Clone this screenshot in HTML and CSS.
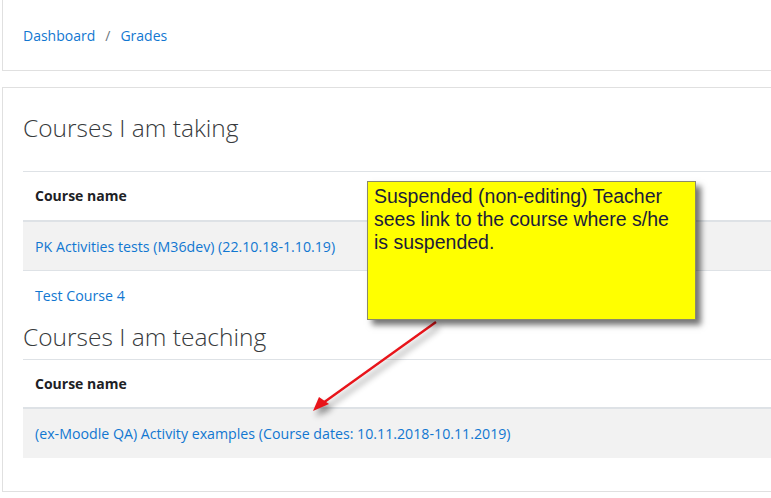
FILE: index.html
```html
<!DOCTYPE html>
<html>
<head>
<meta charset="utf-8">
<link rel="stylesheet" href="styles.css">
</head>
<body>
<div class="page">
  <div class="card nav-card">
    <nav class="breadcrumb">
      <a href="#">Dashboard</a><span class="sep">/</span><a href="#">Grades</a>
    </nav>
  </div>
  <div class="card main-card">
    <h3 class="heading first">Courses I am taking</h3>
    <table class="grades">
      <thead><tr><th>Course name</th></tr></thead>
      <tbody>
        <tr class="odd"><td><a href="#">PK Activities tests (M36dev) (22.10.18-1.10.19)</a></td></tr>
        <tr><td><a href="#">Test Course 4</a></td></tr>
      </tbody>
    </table>
    <h3 class="heading second">Courses I am teaching</h3>
    <table class="grades">
      <thead><tr><th>Course name</th></tr></thead>
      <tbody>
        <tr class="odd"><td><a href="#">(ex-Moodle QA) Activity examples (Course dates: 10.11.2018-10.11.2019)</a></td></tr>
      </tbody>
    </table>
  </div>
</div>
<svg class="arrow" width="771" height="498" viewBox="0 0 771 498">
  <line x1="436" y1="322" x2="323" y2="403" stroke="#e8141a" stroke-width="2.4"/>
  <polygon points="313,411 319,397 329,404" fill="#e8141a"/>
</svg>
<div class="callout">Suspended (non-editing) Teacher sees link to the course where s/he is suspended.</div>
</body>
</html>
```
FILE: styles.css
```css
html, body {
  margin: 0;
  padding: 0;
  background: #fff;
  overflow: hidden;
}
body {
  width: 771px;
  height: 498px;
  position: relative;
  font-family: "Open Sans", "Liberation Sans", sans-serif;
  font-size: 14px;
  color: #373a3c;
}
.page {
  padding-left: 2px;
  display: flex;
  flex-direction: column;
  gap: 16px;
}
.card {
  border: 1px solid #e0e0e0;
  width: 800px;
  background: #fff;
}
.nav-card {
  border-top: none;
  padding: 25px 20px 23px 20px;
}
.breadcrumb {
  display: flex;
  align-items: center;
  line-height: 22px;
  font-size: 14px;
}
.breadcrumb a {
  color: #1177d1;
  text-decoration: none;
}
.breadcrumb .sep {
  color: #6c757d;
  padding: 0 10px 0 10px;
}
.main-card {
  padding: 20px 20px 33px 20px;
}
.heading {
  margin: 0;
  font-weight: 300;
  font-size: 24.5px;
  line-height: 32px;
  color: #373a3c;
}
.heading.first {
  margin-top: 4px;
  margin-bottom: 27px;
}
.heading.second {
  margin-top: 1px;
  margin-bottom: 6px;
}
.grades {
  border-collapse: collapse;
  width: 100%;
}
.grades th,
.grades td {
  text-align: left;
  line-height: 22.5px;
  font-size: 14.2px;
}
.grades td {
  padding: 14px 12px 12px 12px;
  border-top: 1px solid #dee2e6;
}
.grades th {
  padding: 13px 12px 12px 12px;
  border-top: 1px solid #dee2e6;
  border-bottom: 2px solid #dee2e6;
  font-weight: 700;
  color: #1d2125;
  font-size: 14px;
}
.grades tbody tr:first-child td {
  border-top: none;
}
.grades tr.odd td {
  background: #f2f2f2;
}
.grades a {
  color: #1177d1;
  text-decoration: none;
}
.arrow {
  position: absolute;
  left: 0;
  top: 0;
  filter: drop-shadow(3px 5px 3px rgba(0,0,0,0.45));
}
.callout {
  position: absolute;
  left: 367px;
  top: 181px;
  width: 300px;
  height: 126px;
  padding: 3px 21px 8px 6px;
  background: #ffff00;
  border: 1px solid #8a8a6a;
  box-shadow: 5px 5px 6px rgba(0,0,0,0.55);
  font-family: "Liberation Sans", Arial, sans-serif;
  font-size: 19.5px;
  line-height: 23px;
  color: #1c1c3a;
}
```
